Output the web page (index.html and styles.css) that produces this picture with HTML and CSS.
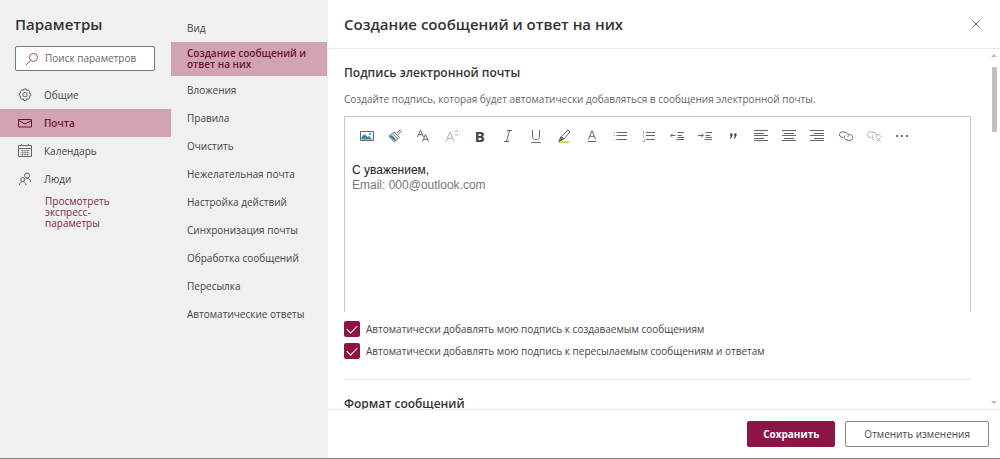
FILE: index.html
```html
<!DOCTYPE html>
<html lang="ru">
<head>
    <meta charset="UTF-8">
    <meta name="viewport" content="width=device-width, initial-scale=1.0">
    <title>Параметры</title>
    <link rel="stylesheet" href="styles.css">
</head>
<body>
    <div class="settings">
        <!-- Categories -->
        <nav class="categories">
            <h1 class="title">Параметры</h1>
            <label class="search">
                <svg class="search-icon" viewBox="0 0 14 14"><circle cx="8.5" cy="5.5" r="4"/><path d="M5.7 8.3L1 13"/></svg>
                <input type="text" placeholder="Поиск параметров" aria-label="Поиск параметров">
            </label>
            <button class="category" type="button">
                <svg class="icon" viewBox="0 0 14 14"><path d="M5.8 1h2.4l.4 1.600 1.500-.8 1.700 1.600-.8 1.500 1.700.5v2.400l-1.700.5.8 1.600-1.600 1.600-1.600-.8-.4 1.800H5.800l-.5-1.800-1.500.8-1.700-1.600.8-1.600L1.200 7.800V5.400l1.700-.5-.8-1.500 1.700-1.600 1.500.8z"/><circle cx="7" cy="6.700" r="2.200"/></svg>
                Общие
            </button>
            <button class="category selected" type="button">
                <svg class="icon" viewBox="0 0 14 14"><path d="M.5 3.500h13v7.500H.5zM.5 4.500L7 8l6.500-3.500"/></svg>
                Почта
            </button>
            <button class="category" type="button">
                <svg class="icon" viewBox="0 0 14 14"><path d="M.5 1.500h13v11H.5zM.5 4.500h13M3.500 0v2M10.500 0v2"/><path class="faint" d="M2.500 6.500h9M2.500 8.500h9M2.500 10.500h9M4.500 6v6M7 6v6M9.500 6v6"/></svg>
                Календарь
            </button>
            <button class="category" type="button">
                <svg class="icon" viewBox="0 0 14 14"><circle cx="9" cy="3.500" r="2.500"/><path d="M7.500 7.300C9.500 5.300 12.500 7 12.700 10"/><circle cx="4.700" cy="7.500" r="2"/><path d="M1.500 13c0-4.500 6.400-4.500 6.400 0"/></svg>
                Люди
            </button>
            <a class="quick-link" href="#">Просмотреть экспресс-параметры</a>
        </nav>

        <!-- Mail sections -->
        <nav class="sections">
            <button class="section-item" type="button">Вид</button>
            <button class="section-item selected" type="button">Создание сообщений и ответ на них</button>
            <button class="section-item" type="button">Вложения</button>
            <button class="section-item" type="button">Правила</button>
            <button class="section-item" type="button">Очистить</button>
            <button class="section-item" type="button">Нежелательная почта</button>
            <button class="section-item" type="button">Настройка действий</button>
            <button class="section-item" type="button">Синхронизация почты</button>
            <button class="section-item" type="button">Обработка сообщений</button>
            <button class="section-item" type="button">Пересылка</button>
            <button class="section-item" type="button">Автоматические ответы</button>
        </nav>

        <main class="panel">
            <header class="panel-header">
                <h2 class="title">Создание сообщений и ответ на них</h2>
                <button class="close" type="button" aria-label="Закрыть">
                    <svg viewBox="0 0 10 10"><path d="M.5.5l9 9M9.500.5l-9 9"/></svg>
                </button>
            </header>

            <div class="panel-body">
                <div class="content">
                    <h3 class="subtitle">Подпись электронной почты</h3>
                    <p class="description">Создайте подпись, которая будет автоматически добавляться в сообщения электронной почты.</p>

                    <div class="editor">
                        <div class="toolbar">
                            <button type="button" aria-label="Вставить рисунок"><svg viewBox="0 0 14 14"><path fill="#fff" d="M.5 2.500h13v9H.5z"/><path class="blue" d="M1.500 10.500V8l3-3 3 3 1.500-1 3.500 3.500z"/><circle class="blue" cx="10" cy="5" r="1"/></svg></button>
                            <button type="button" aria-label="Формат по образцу"><svg viewBox="0 0 14 14"><path d="M12.500 .5L9 3.800M13.800 1.800L10.300 5.200M6 2.800l5.500 5.400L10 9.700 4.500 4.300zM4.500 4.800L.8 7l5.500 6 3.700-3.500"/><path class="blue" d="M4 6L1.500 7.500l5 4.500 1.500-2z"/></svg></button>
                            <button type="button" aria-label="Шрифт"><svg viewBox="0 0 14 14"><path d="M1.500 8L4.500 1l3 7M2.500 5.700h4M6.500 12.500l3-7 3 7M7.500 10.300h4"/></svg></button>
                            <button type="button" aria-label="Размер шрифта"><svg class="muted" viewBox="0 0 14 14"><path d="M1 12.500L5 3l4 9.500M2.500 9.300h5M9.700 3L11.300 1.300 13 3M9.700 5l1.600 1.700L13 5"/></svg></button>
                            <button type="button" class="bold">B</button>
                            <button type="button" aria-label="Курсив"><svg viewBox="0 0 14 14"><path d="M6 1.500h5M3 12.500h5M8.500 1.500l-3 11"/></svg></button>
                            <button type="button" aria-label="Подчеркнутый"><svg viewBox="0 0 14 14"><path d="M3.500 1v6c0 5 7 5 7 0V1M2.500 13.500h9"/></svg></button>
                            <button type="button" aria-label="Цвет выделения"><svg viewBox="0 0 14 14"><path class="marker" d="M1 13.200h11"/><path d="M4.300 7.500L11 1l2 2-6.200 7zM4.300 7.500L2 12l4.800-2z"/><path class="solid" d="M4 8.200L2 12l4-1.700z"/></svg></button>
                            <button type="button" aria-label="Цвет шрифта"><svg viewBox="0 0 14 14"><path d="M3.500 10.500L7 1.500l3.500 9M4.800 7.300h4.400M2.500 12.500h9"/></svg></button>
                            <button type="button" aria-label="Маркеры"><svg viewBox="0 0 14 14"><path d="M3.500 3.500H14M3.500 6.500H14M3.500 10.500H14"/><path class="faint" d="M.5 3.500h1.500M.5 6.500h1.500M.5 10.500h1.500"/></svg></button>
                            <button type="button" aria-label="Нумерация"><svg viewBox="0 0 14 14"><path d="M4 3.500h9M4 6.500h9M4 10.500h9"/><path class="faint" d="M1.500 1.500V5M1.500 6v2.500M.5 12.500h2V9.500"/></svg></button>
                            <button type="button" aria-label="Уменьшить отступ"><svg viewBox="0 0 14 14"><path d="M.5 6.500h5M2.500 4.800L.8 6.500l1.700 1.700M7.500 3.500H14M7.500 6.500H12M7.500 8.500H14M6.500 10.500H14"/></svg></button>
                            <button type="button" aria-label="Увеличить отступ"><svg viewBox="0 0 14 14"><path d="M0 6.500h5.500M3.500 4.800l1.700 1.700-1.700 1.700M7.500 3.500H14M7.500 6.500H12M7.500 8.500H14M6.500 10.500H14"/></svg></button>
                            <button type="button" aria-label="Цитата"><svg class="quote" viewBox="0 0 14 14"><path d="M4.200 4.500h2.300v2.300L4.800 9.800h-.9l.9-3h-.6zM8.200 4.500h2.300v2.300L8.800 9.800h-.9l.9-3h-.6z"/></svg></button>
                            <button type="button" aria-label="По левому краю"><svg viewBox="0 0 14 14"><path d="M0 1.500h14M0 4.500h10M0 6.500h14M0 9.500h10M0 11.500h14"/></svg></button>
                            <button type="button" aria-label="По центру"><svg viewBox="0 0 14 14"><path d="M0 1.500h14M2 4.500h10M0 6.500h14M2 9.500h10M0 11.500h14"/></svg></button>
                            <button type="button" aria-label="По правому краю"><svg viewBox="0 0 14 14"><path d="M0 1.500h14M4 4.500h10M0 6.500h14M4 9.500h10M0 11.500h14"/></svg></button>
                            <button type="button" aria-label="Вставить ссылку"><svg viewBox="0 0 14 14"><path d="M4 8.500C1 8.500 0 6.500.8 4.500S3.500 2.700 5 3l2 .5c2.500.7 3 3 1.500 4.500M10 5.500c3.500.2 4.300 2.500 3.200 4.500S10 11.500 8 11C5 10.500 4.500 7.500 6.500 6"/></svg></button>
                            <button type="button" disabled aria-label="Удалить ссылку"><svg viewBox="0 0 14 14"><path d="M4 8.500C1 8.500 0 6.500.8 4.500S3.500 2.700 5 3l2 .5c2.500.7 3 3 1.500 4.500M13.500 7.500C13.300 6 12 5.500 10 5.500M7 11C5 10 4.500 7.500 6.500 6M9.500 8.500l4 4M13.500 8.500l-4 4"/></svg></button>
                            <button type="button" aria-label="Дополнительно"><svg class="dots" viewBox="0 0 14 14"><circle cx="2" cy="7" r="1"/><circle cx="7" cy="7" r="1"/><circle cx="12" cy="7" r="1"/></svg></button>
                        </div>
                        <div class="signature" contenteditable="true" spellcheck="false" role="textbox" aria-label="Подпись">
                            <div>С уважением,</div>
                            <div class="grey">Email: 000@outlook.com</div>
                        </div>
                    </div>

                    <label class="check"><input type="checkbox" checked>Автоматически добавлять мою подпись к создаваемым сообщениям</label>
                    <label class="check"><input type="checkbox" checked>Автоматически добавлять мою подпись к пересылаемым сообщениям и ответам</label>

                    <hr class="divider">
                    <h3 class="subtitle">Формат сообщений</h3>
                </div>

                <div class="scrollbar">
                    <span class="arrow up"></span>
                    <span class="thumb"></span>
                    <span class="arrow down"></span>
                </div>
            </div>

            <footer class="panel-footer">
                <button class="btn primary" type="button">Сохранить</button>
                <button class="btn" type="button">Отменить изменения</button>
            </footer>
        </main>
    </div>
</body>
</html>
```

FILE: styles.css
```css
* {
    box-sizing: border-box;
}

body {
    margin: 0;
    font-family: "Open Sans", "Noto Sans", sans-serif;
    font-size: 10px;
    line-height: 11px;
    color: #444;
}

button, input {
    font: inherit;
    color: inherit;
}

button {
    padding: 0;
    border: none;
    background: none;
}

h1, h2, h3, p {
    margin: 0;
}

svg {
    fill: none;
    stroke: currentColor;
}

.settings {
    display: flex;
    height: 100vh;
    border-bottom: 1px solid #888;
}

/* Left columns */
.categories,
.sections {
    display: flex;
    flex-direction: column;
    flex: none;
    background: #f0f0f0;
}

.categories {
    width: 171px;
    padding-top: 13px;
}

.sections {
    width: 157px;
    padding: 14px 1px 0 0;
}

.title {
    font-size: 15px;
    line-height: 22px;
    font-weight: 600;
    color: #333;
}

.categories .title {
    margin: 0 15px 11px;
}

.search {
    display: flex;
    align-items: center;
    gap: 6px;
    height: 25px;
    margin: 0 16px 10px 15px;
    padding-left: 9px;
    border: 1px solid #777;
    border-radius: 2px;
    background: #fff;
}

.search-icon {
    flex: none;
    width: 14px;
    height: 14px;
    color: #96506a;
}

.search input {
    width: 100%;
    min-width: 0;
    padding: 0;
    border: none;
    outline: none;
    background: transparent;
}

.search input::placeholder {
    color: #666;
}

.category {
    display: flex;
    align-items: center;
    gap: 12px;
    height: 28px;
    padding-left: 18px;
}

.icon {
    width: 14px;
    height: 14px;
}

.category:not(.selected) .icon {
    color: #666;
}

.faint {
    opacity: 0.5;
}

.selected {
    background: #d2a3b3;
    color: #6a1238;
    font-weight: 600;
}

.quick-link {
    width: 80px;
    margin: 3px 0 0 45px;
    color: #85234d;
    text-decoration: none;
}

.section-item {
    min-height: 28px;
    padding: 0 15px 0 16px;
    text-align: left;
}

.section-item.selected {
    min-height: 34px;
}

/* Right panel */
.panel {
    display: flex;
    flex-direction: column;
    flex: 1;
    min-width: 0;
}

.panel-header {
    display: flex;
    align-items: center;
    justify-content: space-between;
    flex: none;
    height: 49px;
    padding: 0 19px 0 16px;
    border-bottom: 1px solid #eaeaea;
}

.close svg {
    display: block;
    width: 10px;
    height: 10px;
    color: #777;
}

.panel-body {
    display: flex;
    flex: 1;
    min-height: 0;
    overflow: hidden;
}

.content {
    flex: 1;
    min-width: 0;
    padding: 15px 17px 0 16px;
}

.subtitle {
    font-size: 12px;
    line-height: 18px;
    font-weight: 600;
    color: #333;
}

.description {
    margin: 12px 0 11px;
    color: #666;
}

.editor {
    height: 196px;
    margin-bottom: 9px;
    border: 1px solid #c8c8c8;
    border-bottom: none;
}

.toolbar {
    display: grid;
    grid-template-columns: repeat(20, 1fr);
    width: 563px;
    padding-top: 5px;
    margin-left: 8px;
}

.toolbar button {
    display: flex;
    align-items: center;
    justify-content: center;
    height: 28px;
    color: #666;
}

.toolbar svg {
    width: 14px;
    height: 14px;
}

.toolbar button:disabled,
.toolbar .muted {
    color: #aaa;
}

.toolbar .bold {
    font-size: 15px;
    font-weight: 700;
    color: #444;
}

.blue {
    fill: #3d80b4;
    stroke: none;
}

.marker {
    stroke: #d6d34a;
    stroke-width: 2;
}

.solid {
    fill: currentColor;
}

.quote,
.dots {
    fill: #444;
    stroke: none;
}

.signature {
    padding: 13px 7px;
    font-family: "Liberation Sans", Arial, sans-serif;
    font-size: 12px;
    line-height: 15px;
    color: #222;
    outline: none;
}

.grey {
    color: #777;
}

.check {
    display: flex;
    align-items: center;
    gap: 6px;
    height: 16px;
    margin-bottom: 6px;
}

.check input {
    display: flex;
    align-items: center;
    justify-content: center;
    appearance: none;
    width: 16px;
    height: 16px;
    margin: 0;
    border-radius: 2px;
    background: #8c1546;
}

.check input:checked::after {
    content: "";
    width: 9px;
    height: 5px;
    margin-bottom: 3px;
    border: solid #fff;
    border-width: 0 0 1px 1px;
    transform: rotate(-45deg);
}

.divider {
    margin: 20px 0 15px;
    border: none;
    border-top: 1px solid #e3e3e3;
}

.scrollbar {
    display: flex;
    flex-direction: column;
    align-items: center;
    width: 12px;
    padding: 5px 0;
}

.thumb {
    width: 5px;
    height: 65px;
    margin: 10px 0 auto;
    background: #c1c1c1;
}

.arrow {
    border: 3px solid transparent;
}

.up {
    border-top: none;
    border-bottom-color: #bbb;
}

.down {
    border-bottom: none;
    border-top-color: #bbb;
}

.panel-footer {
    display: flex;
    align-items: center;
    justify-content: flex-end;
    flex: none;
    gap: 10px;
    height: 49px;
    padding: 0 11px;
    border-top: 1px solid #e6e6e6;
}

.btn {
    height: 26px;
    padding: 0 18px;
    border: 1px solid #888;
    border-radius: 2px;
    background: #fff;
}

.btn.primary {
    padding: 0 15px;
    border-color: #8c1546;
    background: #8c1546;
    color: #fff;
    font-weight: 700;
}
```
